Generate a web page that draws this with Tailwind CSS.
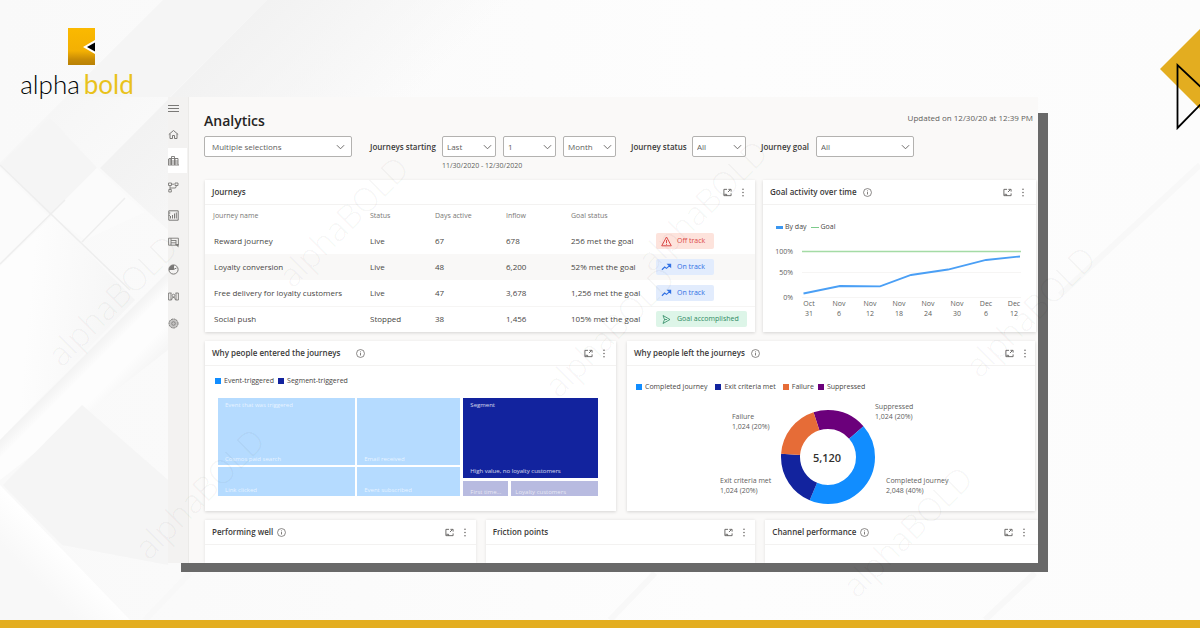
<!DOCTYPE html>
<html lang="en">
<head>
<meta charset="utf-8">
<meta name="viewport" content="width=device-width, initial-scale=1">
<title>Analytics - alphabold</title>
<script src="https://cdn.jsdelivr.net/npm/@tailwindcss/browser@4"></script>
</head>
<body class="bg-[#fcfcfc]">
<svg class="hidden">
  <symbol id="expand" viewBox="0 0 10 10"><path d="M4.500 1.500H1v7h8V6M1.500 7h2.500v1.500M5.500 4.500 8 2M6 1.500h3v2.500" fill="none" stroke="currentColor" stroke-width="1"/></symbol>
  <symbol id="more" viewBox="0 0 4 10"><g fill="currentColor"><circle cx="2" cy="1.300" r=".8"/><circle cx="2" cy="5" r=".8"/><circle cx="2" cy="8.700" r=".8"/></g></symbol>
  <symbol id="info" viewBox="0 0 10 10"><circle cx="5" cy="5" r="4.400" fill="none" stroke="currentColor" stroke-width=".8"/><path d="M5 4.500v2.700M5 2.700v1" stroke="currentColor" stroke-width=".9"/></symbol>
  <symbol id="chev" viewBox="0 0 10 6"><path d="M1 1l4 4 4-4" fill="none" stroke="currentColor" stroke-width="1"/></symbol>
  <symbol id="trend" viewBox="0 0 12 10"><path d="M1 8 4 5l2 1.500 4-3.500M7.500 2h3v3z" fill="none" stroke="currentColor" stroke-width="1.200"/></symbol>
</svg>

<div class="relative flex min-h-screen flex-col overflow-hidden font-['Open_Sans','Noto_Sans',sans-serif] text-[#484644]">

  <!-- backdrop -->
  <svg class="absolute inset-0 h-full w-full" viewBox="0 0 1200 628" preserveAspectRatio="none" aria-hidden="true">
    <defs>
      <linearGradient id="base" x1="0" x2="1"><stop offset="0" stop-color="#f9f9f9"/><stop offset=".6" stop-color="#fdfdfd"/><stop offset="1" stop-color="#fcfcfc"/></linearGradient>
      <linearGradient id="g1" gradientUnits="userSpaceOnUse" x1="80" y1="80" x2="133" y2="133"><stop offset="0" stop-color="#f6f6f6"/><stop offset="1" stop-color="#f9f9f9"/></linearGradient>
      <linearGradient id="g2" gradientUnits="userSpaceOnUse" x1="180" y1="90" x2="300" y2="210"><stop offset="0" stop-color="#f2f2f2"/><stop offset="1" stop-color="#f2f2f2" stop-opacity="0"/></linearGradient>
      <linearGradient id="g3" gradientUnits="userSpaceOnUse" x1="30" y1="290" x2="140" y2="300"><stop offset="0" stop-color="#fdfdfd"/><stop offset="1" stop-color="#f4f4f4"/></linearGradient>
      <linearGradient id="g4" gradientUnits="userSpaceOnUse" x1="50" y1="385" x2="90" y2="425"><stop offset="0" stop-color="#f0f0f0"/><stop offset=".3" stop-color="#fdfdfd"/><stop offset=".7" stop-color="#fdfdfd"/><stop offset="1" stop-color="#f6f6f6"/></linearGradient>
      <linearGradient id="g5" gradientUnits="userSpaceOnUse" x1="60" y1="545" x2="30" y2="575"><stop offset="0" stop-color="#ffffff"/><stop offset="1" stop-color="#f8f8f8"/></linearGradient>
      <linearGradient id="g6" gradientUnits="userSpaceOnUse" x1="240" y1="50" x2="300" y2="110"><stop offset="0" stop-color="#fdfdfd" stop-opacity="0"/><stop offset="1" stop-color="#ffffff"/></linearGradient>
    </defs>
    <path d="M0 0H1200V628H0Z" fill="url(#base)"/>
    <path d="M163 0H267L97 170 50 118 0 165V163Z" fill="url(#g1)"/>
    <path d="M267 0H520L260 260 190 250 100 168Z" fill="url(#g2)"/>
    <path d="M163 0H267L170 97H66Z" fill="#f5f5f5"/>
    <path d="M200 67 267 0 170 97H100Z" fill="url(#g6)"/>
    <path d="M50 118 97 168 50 215 0 165Z" fill="#f5f5f5"/>
    <path d="M97 168 145 212 85 240 50 215Z" fill="#fbfbfb"/>
    <path d="M0 168 48 216 0 264Z" fill="#fbfbfb"/>
    <path d="M52 216 135 300 0 440V266Z" fill="url(#g3)"/>
    <path d="M0 440 168 272V350L0 480Z" fill="url(#g4)"/>
    <path d="M82 405 168 480V565L62 545 3 485Z" fill="#f5f5f5"/>
    <path d="M0 485 130 620H0Z" fill="url(#g5)"/>
    <path d="M0 165 130 290M0 264 65 200M82 242 125 198" stroke="#eeeeee" stroke-width="1.500" fill="none"/>
    <path d="M190 573 145 620M655 573 610 620M1200 165 1060 295M1035 573 985 620" stroke="#f8f8f8" stroke-width="6" fill="none"/>
  </svg>

  <header class="relative flex h-[97px] items-start justify-between">
    <a href="#" aria-label="alphabold home" class="ml-[18px] mt-7 flex w-[118px] flex-col items-center">
      <svg class="ml-[9px] h-[37px] w-[27px]" viewBox="0 0 27 37">
        <defs><linearGradient id="lg" x2="0" y2="1"><stop offset="0" stop-color="#fbb900"/><stop offset=".62" stop-color="#f3b003"/><stop offset=".85" stop-color="#c78b06"/><stop offset="1" stop-color="#b98206"/></linearGradient></defs>
        <path d="M0 0h27v37H0z" fill="url(#lg)"/><path d="M15 19 27 12v14z" fill="#fff"/><path d="M19 19l8-4.500v9z" fill="#000"/>
      </svg>
      <span class="mt-1 flex gap-1 whitespace-nowrap font-['Lato'] text-[26px] leading-[30px]"><span class="font-light text-black">alpha</span><span class="text-[#e9c21c]">bold</span></span>
    </a>
    <svg class="mt-7 h-[104px] w-10 shrink-0" viewBox="0 0 40 104" aria-hidden="true">
      <path d="M0 41 40 1v80z" fill="#e3ad20"/><path d="M44 62 17.500 37v63L44 73" fill="none" stroke="#000" stroke-width="1.800"/>
    </svg>
  </header>

  <main class="relative ml-[168px] mr-[162px]">
    <div class="absolute -bottom-[9px] -right-[10px] left-[13px] top-4 bg-[#696969]"></div>
    <div class="relative flex bg-[#faf9f8]">

      <nav aria-label="Main" class="flex w-[21px] shrink-0 flex-col border-r border-[#ebeae8] bg-[#f3f2f1] text-[#7a7977]">
        <button aria-label="Menu" class="flex h-[23px] items-center"><svg class="size-[11px]" viewBox="0 0 11 11"><path d="M0 2.500h11M0 5.500h11M0 8.500h11" stroke="currentColor"/></svg></button>
        <button aria-label="Home" class="flex h-7 items-center"><svg class="size-[11px]" viewBox="0 0 11 11"><path d="M.8 5.500 5.500 1.500l4.700 4M2 4.800v4.700h2.500V6.500h2v3H9V4.800" fill="none" stroke="currentColor"/></svg></button>
        <button aria-label="Analytics" aria-current="page" class="flex h-[25px] w-[19px] items-center bg-white"><svg class="size-[11px]" viewBox="0 0 11 11"><path d="M.5 10V4h2.500v6M3.500 10V1.500h3V10M7 10V3.500h3V10M0 10h11M1 6h9M1 8h9M1 3.500h9" fill="none" stroke="currentColor" stroke-width=".9"/></svg></button>
        <button aria-label="Journeys" class="flex h-[29px] items-center"><svg class="size-[11px]" viewBox="0 0 11 11"><path d="M.5 1h3v2.500h-3zM7 1h3v2.500H7zM.8 7.500h2.500V10H.8zM2 3.500v4M2 6h5.500L8.500 3.500M4 2.200h2" fill="none" stroke="currentColor" stroke-width=".9"/></svg></button>
        <button aria-label="Segments" class="flex h-[27px] items-center"><svg class="size-[11px]" viewBox="0 0 11 11"><path d="M.8.8h9.400v9.400H.8zM2.500 8.500V6M4.500 8.500V5M6.500 8.500V3.500M8.300 8.500V2.500M.8 3h1.500M.8 5.500h1" fill="none" stroke="currentColor"/></svg></button>
        <button aria-label="Messages" class="flex h-[27px] items-center"><svg class="size-[11px]" viewBox="0 0 11 11"><path d="M.6 1.200h9.800v7H.6zM3 1.200v7M3 3.500h5M3 5.800h5M8 3v5" fill="none" stroke="currentColor" stroke-width=".9"/><path d="M7 7h3.500v3.500z" fill="currentColor"/></svg></button>
        <button aria-label="Reports" class="flex h-[27px] items-center"><svg class="size-[11px]" viewBox="0 0 11 11"><circle cx="5.500" cy="5.500" r="4.600" fill="none" stroke="currentColor"/><path d="M5.500 1v4.500l3-1.500M1 5.500h4.500" fill="none" stroke="currentColor"/><path d="M5.500 1A4.600 4.600 0 0 0 1 5.500h4.500z" fill="currentColor"/></svg></button>
        <button aria-label="Library" class="flex h-[27px] items-center"><svg class="size-[11px]" viewBox="0 0 11 11"><path d="M3.500 2H.6v7h2.900M7.500 2h2.900v7H7.500M3 2v7M8 2v7M3.500 9l1-2.500h2l1 2.500" fill="none" stroke="currentColor" stroke-width=".9"/><circle cx="5.500" cy="4.500" r="1.300" fill="none" stroke="currentColor" stroke-width=".9"/></svg></button>
        <button aria-label="Settings" class="flex h-[27px] items-center"><svg class="size-[11px]" viewBox="0 0 11 11"><circle cx="5.500" cy="5.500" r="4.500" fill="#c4c3c2" stroke="currentColor" stroke-dasharray="2 .6"/><circle cx="5.500" cy="5.500" r="1.800" fill="none" stroke="currentColor" stroke-width=".8"/></svg></button>
      </nav>

      <div class="min-w-0 grow">
        <div class="flex h-[39px] items-end justify-between pb-[5px] pl-[15px] pr-[5px]">
          <h1 class="text-[14px] font-semibold leading-5 text-[#252423]">Analytics</h1>
          <p class="pb-[3px] text-[8px] leading-5 text-[#605e5c]">Updated on 12/30/20 at 12:39 PM</p>
        </div>

        <form class="flex h-[44px] items-start whitespace-nowrap pl-[15px] text-[8px] text-[#605e5c]">
          <div class="relative w-[148px]"><select aria-label="Selections" class="h-[21px] w-full appearance-none rounded-[2px] border border-[#b3b2b0] bg-white pl-[7px]"><option>Multiple selections</option></select><svg class="pointer-events-none absolute right-[7px] top-2 h-[6px] w-[9px]"><use href="#chev"/></svg></div>
          <label for="last" class="ml-[18px] w-[72px] font-semibold leading-[21px] text-[#3b3a39]">Journeys starting</label>
          <div>
            <div class="flex gap-[7px]">
              <div class="relative w-[54px]"><select id="last" class="h-[21px] w-full appearance-none rounded-[2px] border border-[#b3b2b0] bg-white pl-1"><option>Last</option></select><svg class="pointer-events-none absolute right-1 top-2 h-[6px] w-[9px]"><use href="#chev"/></svg></div>
              <div class="relative w-[53px]"><select aria-label="Amount" class="h-[21px] w-full appearance-none rounded-[2px] border border-[#b3b2b0] bg-white pl-1"><option>1</option></select><svg class="pointer-events-none absolute right-1 top-2 h-[6px] w-[9px]"><use href="#chev"/></svg></div>
              <div class="relative w-[53px]"><select aria-label="Unit" class="h-[21px] w-full appearance-none rounded-[2px] border border-[#b3b2b0] bg-white pl-1"><option>Month</option></select><svg class="pointer-events-none absolute right-1 top-2 h-[6px] w-[9px]"><use href="#chev"/></svg></div>
            </div>
            <p class="mt-[3px] text-[7px] leading-[11px]">11/30/2020 - 12/30/2020</p>
          </div>
          <label for="status" class="ml-[15px] w-[61px] font-semibold leading-[21px] text-[#3b3a39]">Journey status</label>
          <div class="relative w-[54px]"><select id="status" class="h-[21px] w-full appearance-none rounded-[2px] border border-[#b3b2b0] bg-white pl-1"><option>All</option></select><svg class="pointer-events-none absolute right-1 top-2 h-[6px] w-[9px]"><use href="#chev"/></svg></div>
          <label for="goal" class="ml-[15px] w-[55px] font-semibold leading-[21px] text-[#3b3a39]">Journey goal</label>
          <div class="relative w-[98px]"><select id="goal" class="h-[21px] w-full appearance-none rounded-[2px] border border-[#b3b2b0] bg-white pl-1"><option>All</option></select><svg class="pointer-events-none absolute right-1 top-2 h-[6px] w-[9px]"><use href="#chev"/></svg></div>
        </form>

        <div class="flex flex-col gap-[9px] pl-4">
          <div class="grid grid-cols-[550fr_273fr] gap-2 pr-0.5">
            <section class="bg-white shadow-[0_1px_3px_#00000026]">
              <header class="flex h-[25px] items-center border-b border-[#f3f2f1] pl-[7px] pr-2.5 text-[#605e5c]">
                <h2 class="grow text-[8px] font-semibold text-[#3b3a39]">Journeys</h2>
                <button aria-label="Expand"><svg class="size-[9px]"><use href="#expand"/></svg></button>
                <button aria-label="More" class="ml-[9px]"><svg class="h-[9px] w-1"><use href="#more"/></svg></button>
              </header>
              <table class="w-full table-fixed whitespace-nowrap text-left text-[8px]">
                <colgroup><col class="w-[165px]"><col class="w-[65px]"><col class="w-[71px]"><col class="w-[65px]"><col class="w-[85px]"><col></colgroup>
                <thead><tr class="h-[23px] text-[7px] text-[#797775]"><th class="pl-2 font-normal">Journey name</th><th class="font-normal">Status</th><th class="font-normal">Days active</th><th class="font-normal">Inflow</th><th class="font-normal" colspan="2">Goal status</th></tr></thead>
                <tbody>
                  <tr class="h-[26px]"><td class="pl-[9px]">Reward journey</td><td>Live</td><td>67</td><td>678</td><td>256 met the goal</td><td><span class="flex h-4 w-[58px] items-center gap-[5px] rounded-[2px] bg-[#fde3dc] pl-[5px] text-[7px] text-[#dc4a48]"><svg class="size-[11px]" viewBox="0 0 11 11"><path d="M5.500 1 10.300 9.800H.7zM5.500 4v3M5.500 7.800v1" fill="none" stroke="currentColor"/></svg>Off track</span></td></tr>
                  <tr class="h-[26px] bg-[#f9f8f7]"><td class="pl-[9px]">Loyalty conversion</td><td>Live</td><td>48</td><td>6,200</td><td>52% met the goal</td><td><span class="flex h-4 w-[58px] items-center gap-[5px] rounded-[2px] bg-[#e2ecfd] pl-[5px] text-[7px] text-[#2f6fe4]"><svg class="h-[10px] w-[11px]"><use href="#trend"/></svg>On track</span></td></tr>
                  <tr class="h-[26px]"><td class="pl-[9px]">Free delivery for loyalty customers</td><td>Live</td><td>47</td><td>3,678</td><td>1,256 met the goal</td><td><span class="flex h-4 w-[58px] items-center gap-[5px] rounded-[2px] bg-[#e2ecfd] pl-[5px] text-[7px] text-[#2f6fe4]"><svg class="h-[10px] w-[11px]"><use href="#trend"/></svg>On track</span></td></tr>
                  <tr class="h-[26px] border-t border-[#f6f5f4]"><td class="pl-[9px]">Social push</td><td>Stopped</td><td>38</td><td>1,456</td><td>105% met the goal</td><td><span class="flex h-4 w-[91px] items-center gap-[5px] rounded-[2px] bg-[#ddf5e8] pl-[5px] text-[7px] text-[#2f8a63]"><svg class="size-[11px]" viewBox="0 0 11 11"><path d="M2 1.500 3.500 5.500 2 9.500M2 1.500l7 4-7 4M3.500 5.500H6" fill="none" stroke="currentColor" stroke-width=".8"/></svg>Goal accomplished</span></td></tr>
                </tbody>
              </table>
            </section>

            <section class="flex flex-col bg-white shadow-[0_1px_3px_#00000026]">
              <header class="flex h-[25px] shrink-0 items-center border-b border-[#f3f2f1] pl-[7px] pr-[11px] text-[#605e5c]">
                <h2 class="text-[8px] font-semibold text-[#3b3a39]">Goal activity over time</h2>
                <button aria-label="About this chart" class="ml-1.5 mr-auto"><svg class="size-[9px]"><use href="#info"/></svg></button>
                <button aria-label="Expand"><svg class="size-[9px]"><use href="#expand"/></svg></button>
                <button aria-label="More" class="ml-[9px]"><svg class="h-[9px] w-1"><use href="#more"/></svg></button>
              </header>
              <div class="flex items-center pl-[13px] pt-4 text-[7px] leading-[12px]">
                <span class="h-[3px] w-[7px] bg-[#3a96f0]"></span><span class="ml-0.5">By day</span>
                <span class="ml-1 h-px w-2 bg-[#7ccb8b]"></span><span class="ml-0.5">Goal</span>
              </div>
              <svg class="w-full grow" viewBox="0 0 273 99" role="img" aria-label="Goal activity by day, rising from 5% to 95%">
                <path d="M39 39.500h219M39 64.500h219" stroke="#f6f5f4"/>
                <path d="M39 18.500h219" stroke="#a4dba5" stroke-width="1.300"/>
                <path d="M40.500 60.500 77 53l40 .3L148 42l37-5.500L223 27l34-3.500" fill="none" stroke="#4a9ff5" stroke-width="1.800"/>
                <g font-size="7" fill="#605e5c">
                  <g text-anchor="end"><text x="30" y="21">100%</text><text x="30" y="42">50%</text><text x="30" y="67">0%</text></g>
                  <g text-anchor="middle">
                    <text x="46" y="73">Oct</text><text x="46" y="83">31</text><text x="76" y="73">Nov</text><text x="76" y="83">6</text>
                    <text x="107" y="73">Nov</text><text x="107" y="83">12</text><text x="136" y="73">Nov</text><text x="136" y="83">18</text>
                    <text x="165" y="73">Nov</text><text x="165" y="83">24</text><text x="194" y="73">Nov</text><text x="194" y="83">30</text>
                    <text x="223" y="73">Dec</text><text x="223" y="83">6</text><text x="251" y="73">Dec</text><text x="251" y="83">12</text>
                  </g>
                </g>
              </svg>
            </section>
          </div>

          <div class="grid grid-cols-[411fr_408fr] gap-[11px] pr-[3px]">
            <section class="flex h-[170px] flex-col bg-white shadow-[0_1px_3px_#00000026]">
              <header class="flex h-[25px] shrink-0 items-center border-b border-[#f3f2f1] pl-[7px] pr-2.5 text-[#605e5c]">
                <h2 class="text-[8px] font-semibold text-[#3b3a39]">Why people entered the journeys</h2>
                <button aria-label="About this chart" class="ml-4 mr-auto"><svg class="size-[9px]"><use href="#info"/></svg></button>
                <button aria-label="Expand"><svg class="size-[9px]"><use href="#expand"/></svg></button>
                <button aria-label="More" class="ml-[9px]"><svg class="h-[9px] w-1"><use href="#more"/></svg></button>
              </header>
              <div class="flex items-center pl-2.5 pt-[9px] text-[7px] leading-[12px]">
                <span class="size-[6px] bg-[#118dff]"></span><span class="ml-[3px]">Event-triggered</span>
                <span class="ml-1 size-[6px] bg-[#12239e]"></span><span class="ml-[3px]">Segment-triggered</span>
              </div>
              <div class="mb-[15px] ml-[13px] mr-[18px] mt-[11px] grid grow grid-cols-[243fr_135fr] gap-[3px] text-[6px] leading-[8px] text-white/70">
                <div class="grid grid-cols-[137fr_103fr] grid-rows-[67fr_29fr] gap-0.5">
                  <div class="flex flex-col justify-between bg-[#b5dbff] px-[7px] pb-0.5 pt-[3px]"><span>Event that was triggered</span><span>Cosmos paid search</span></div>
                  <div class="flex items-end bg-[#b5dbff] px-[7px] pb-0.5">Email received</div>
                  <div class="flex items-end bg-[#b5dbff] px-[7px] pb-0.5">Link clicked</div>
                  <div class="flex items-end bg-[#b5dbff] px-[7px] pb-0.5">Event subscribed</div>
                </div>
                <div class="flex flex-col gap-[3px]">
                  <div class="flex grow flex-col justify-between bg-[#12239e] px-[7px] pb-[3px] pt-[3px] text-white/80"><span>Segment</span><span>High value, no loyalty customers</span></div>
                  <div class="flex h-[15px] gap-[3px]"><div class="flex w-[45px] items-end bg-[#b8bbe0] pl-[7px]">First time...</div><div class="flex grow items-end bg-[#b8bbe0] pl-1">Loyalty customers</div></div>
                </div>
              </div>
            </section>

            <section class="flex h-[170px] flex-col bg-white shadow-[0_1px_3px_#00000026]">
              <header class="flex h-[25px] shrink-0 items-center border-b border-[#f3f2f1] pl-[7px] pr-2 text-[#605e5c]">
                <h2 class="text-[8px] font-semibold text-[#3b3a39]">Why people left the journeys</h2>
                <button aria-label="About this chart" class="ml-1.5 mr-auto"><svg class="size-[9px]"><use href="#info"/></svg></button>
                <button aria-label="Expand"><svg class="size-[9px]"><use href="#expand"/></svg></button>
                <button aria-label="More" class="ml-[9px]"><svg class="h-[9px] w-1"><use href="#more"/></svg></button>
              </header>
              <div class="flex items-center pl-[9px] pt-[15px] text-[7px] leading-[12px]">
                <span class="size-[6px] bg-[#118dff]"></span><span class="ml-[3px]">Completed journey</span>
                <span class="ml-2 size-[6px] bg-[#12239e]"></span><span class="ml-[3px]">Exit criteria met</span>
                <span class="ml-[7px] size-[6px] bg-[#e66c37]"></span><span class="ml-[3px]">Failure</span>
                <span class="ml-1 size-[6px] bg-[#6b007b]"></span><span class="ml-[3px]">Suppressed</span>
              </div>
              <div class="flex grow pb-[7px] pl-[93px] text-[7px] leading-[10px] text-[#605e5c]">
                <div class="flex w-[61px] flex-col pb-2 pt-[19px]"><p class="pl-3">Failure<br>1,024 (20%)</p><p class="mt-auto">Exit criteria met<br>1,024 (20%)</p></div>
                <svg class="mt-auto size-[94px] shrink-0" viewBox="0 0 94 94" role="img" aria-label="5,120 people left">
                  <g fill="none" stroke-width="19" transform="rotate(-90 47 47)">
                    <circle cx="47" cy="47" r="37.500" pathLength="360" stroke="#6b007b" stroke-dasharray="67 293" stroke-dashoffset="18"/>
                    <circle cx="47" cy="47" r="37.500" pathLength="360" stroke="#118dff" stroke-dasharray="154 206" stroke-dashoffset="-49"/>
                    <circle cx="47" cy="47" r="37.500" pathLength="360" stroke="#12239e" stroke-dasharray="71 289" stroke-dashoffset="-203"/>
                    <circle cx="47" cy="47" r="37.500" pathLength="360" stroke="#e66c37" stroke-dasharray="68 292" stroke-dashoffset="-274"/>
                  </g>
                  <text x="46" y="52" text-anchor="middle" font-size="11" font-weight="600" fill="#323130">5,120</text>
                </svg>
                <div class="flex flex-col whitespace-nowrap pb-2 pt-[9px]"><p>Suppressed<br>1,024 (20%)</p><p class="mt-auto pl-[11px]">Completed journey<br>2,048 (40%)</p></div>
              </div>
            </section>
          </div>

          <div class="grid grid-cols-[271fr_270fr_273fr] gap-x-[10px]">
            <section class="h-[43px] bg-white shadow-[0_0_3px_#0000001a] [clip-path:inset(-3px_-3px_0)]">
              <header class="flex h-[25px] items-center border-b border-[#f3f2f1] pl-[7px] pr-[9px] text-[#605e5c]">
                <h2 class="text-[8px] font-semibold text-[#3b3a39]">Performing well</h2>
                <button aria-label="About this card" class="ml-1 mr-auto"><svg class="size-[9px]"><use href="#info"/></svg></button>
                <button aria-label="Expand"><svg class="size-[9px]"><use href="#expand"/></svg></button>
                <button aria-label="More" class="ml-[9px]"><svg class="h-[9px] w-1"><use href="#more"/></svg></button>
              </header>
            </section>
            <section class="h-[43px] bg-white shadow-[0_0_3px_#0000001a] [clip-path:inset(-3px_-3px_0)]">
              <header class="flex h-[25px] items-center border-b border-[#f3f2f1] pl-[7px] pr-[9px] text-[#605e5c]">
                <h2 class="mr-auto text-[8px] font-semibold text-[#3b3a39]">Friction points</h2>
                <button aria-label="Expand"><svg class="size-[9px]"><use href="#expand"/></svg></button>
                <button aria-label="More" class="ml-[9px]"><svg class="h-[9px] w-1"><use href="#more"/></svg></button>
              </header>
            </section>
            <section class="h-[43px] bg-white shadow-[0_0_3px_#0000001a] [clip-path:inset(-3px_0_0_-3px)]">
              <header class="flex h-[25px] items-center border-b border-[#f3f2f1] pl-[7px] pr-3 text-[#605e5c]">
                <h2 class="text-[8px] font-semibold text-[#3b3a39]">Channel performance</h2>
                <button aria-label="About this card" class="ml-1 mr-auto"><svg class="size-[9px]"><use href="#info"/></svg></button>
                <button aria-label="Expand"><svg class="size-[9px]"><use href="#expand"/></svg></button>
                <button aria-label="More" class="ml-[9px]"><svg class="h-[9px] w-1"><use href="#more"/></svg></button>
              </header>
            </section>
          </div>
        </div>
      </div>
    </div>
  </main>

  <footer class="relative mt-auto h-2 bg-[#e3ad20]"></footer>

  <!-- repeated diagonal watermark -->
  <svg class="pointer-events-none absolute inset-0 h-full w-full" viewBox="0 0 1200 628" aria-hidden="true">
    <g font-size="33" font-weight="300" text-anchor="middle" fill="#000" fill-opacity=".045">
      <text transform="translate(121 309) rotate(-45)">alphaBOLD</text>
      <text transform="translate(208 502) rotate(-45)">alphaBOLD</text>
      <text transform="translate(352 230) rotate(-45)">alphaBOLD</text>
      <text transform="translate(711 214) rotate(-45)">alphaBOLD</text>
      <text transform="translate(618 340) rotate(-45)">alphaBOLD</text>
      <text transform="translate(1039 320) rotate(-45)">alphaBOLD</text>
      <text transform="translate(916 540) rotate(-45)">alphaBOLD</text>
    </g>
  </svg>
</div>
</body>
</html>
